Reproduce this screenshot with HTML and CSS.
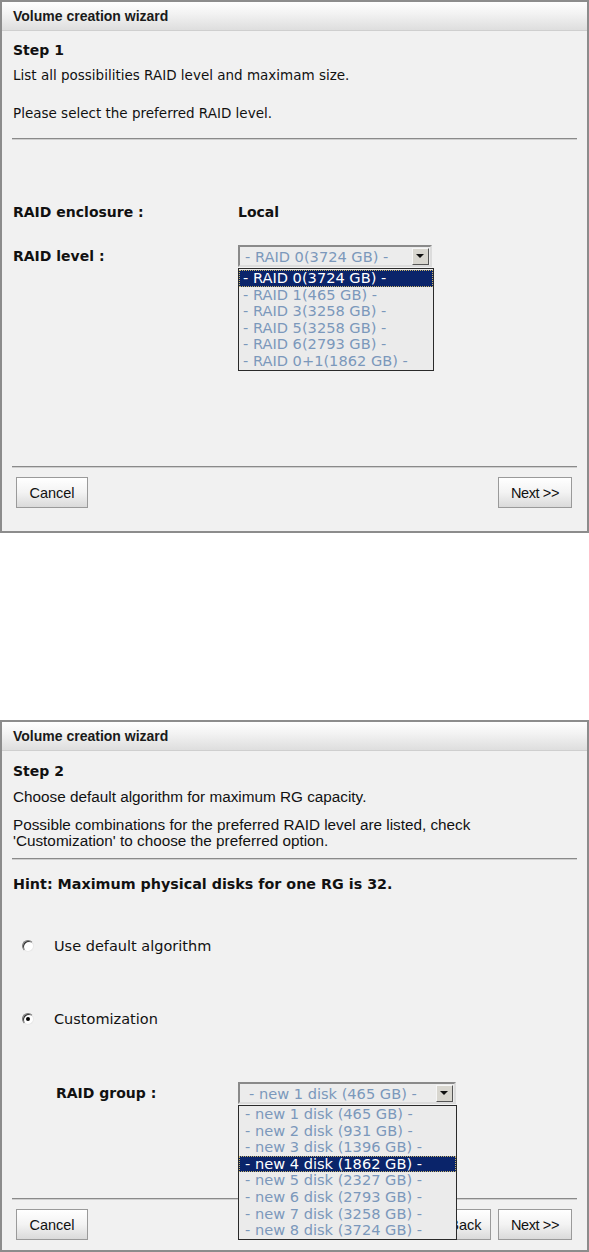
FILE: index.html
```html
<!DOCTYPE html>
<html>
<head>
<meta charset="utf-8">
<title>Volume creation wizard</title>
<link rel="stylesheet" href="styles.css">
</head>
<body>
<div class="panel panel-one">
  <div class="titlebar">Volume creation wizard</div>
  <div class="content">
    <div class="step">Step 1</div>
    <div class="desc desc-first">List all possibilities RAID level and maximam size.</div>
    <div class="desc desc-second">Please select the preferred RAID level.</div>
    <div class="rule rule-top"></div>
    <div class="row row-enclosure">
      <span class="label">RAID enclosure :</span>
      <span class="value">Local</span>
    </div>
    <div class="row row-level">
      <span class="label">RAID level :</span>
      <div class="select-wrap">
        <div class="select select-level"><span class="select-text">- RAID 0(3724 GB) -</span><span class="arrow"></span></div>
        <ul class="listbox listbox-level">
          <li class="sel">- RAID 0(3724 GB) -</li>
          <li>- RAID 1(465 GB) -</li>
          <li>- RAID 3(3258 GB) -</li>
          <li>- RAID 5(3258 GB) -</li>
          <li>- RAID 6(2793 GB) -</li>
          <li>- RAID 0+1(1862 GB) -</li>
        </ul>
      </div>
    </div>
    <div class="rule rule-foot rule-foot-one"></div>
    <div class="buttons">
      <button class="btn btn-cancel">Cancel</button>
      <button class="btn btn-next">Next &gt;&gt;</button>
    </div>
  </div>
</div>

<div class="panel panel-two">
  <div class="titlebar">Volume creation wizard</div>
  <div class="content">
    <div class="step step-two">Step 2</div>
    <div class="desc2 desc2-first">Choose default algorithm for maximum RG capacity.</div>
    <div class="desc2 desc2-second">Possible combinations for the preferred RAID level are listed, check<br>'Customization' to choose the preferred option.</div>
    <div class="rule rule-top2"></div>
    <div class="hint">Hint: Maximum physical disks for one RG is 32.</div>
    <div class="radio-row radio-first"><span class="radio"></span><span class="radio-label">Use default algorithm</span></div>
    <div class="radio-row radio-second"><span class="radio checked"></span><span class="radio-label">Customization</span></div>
    <div class="row row-group">
      <span class="label label-group">RAID group :</span>
      <div class="select-wrap">
        <div class="select select-group"><span class="select-text">- new 1 disk (465 GB) -</span><span class="arrow"></span></div>
        <ul class="listbox listbox-group">
          <li>- new 1 disk (465 GB) -</li>
          <li>- new 2 disk (931 GB) -</li>
          <li>- new 3 disk (1396 GB) -</li>
          <li class="sel">- new 4 disk (1862 GB) -</li>
          <li>- new 5 disk (2327 GB) -</li>
          <li>- new 6 disk (2793 GB) -</li>
          <li>- new 7 disk (3258 GB) -</li>
          <li>- new 8 disk (3724 GB) -</li>
        </ul>
      </div>
    </div>
    <div class="rule rule-foot rule-foot-two"></div>
    <div class="buttons">
      <button class="btn btn-cancel">Cancel</button>
      <div class="btn-right">
        <button class="btn btn-back">&lt;&lt; Back</button>
        <button class="btn btn-next">Next &gt;&gt;</button>
      </div>
    </div>
  </div>
</div>
</body>
</html>
```
FILE: styles.css
```css
* { box-sizing: border-box; }
html, body { margin: 0; padding: 0; background: #ffffff; }
body {
  width: 589px;
  font-family: "DejaVu Sans", Verdana, sans-serif;
  color: #111;
}
.panel {
  width: 589px;
  border: 2px solid #8c8c8c;
  background: #f1f1f1;
}
.panel-one { height: 533px; }
.panel-two { height: 532px; margin-top: 187px; }
.titlebar {
  height: 29px;
  border-bottom: 1px solid #cfcfcf;
  background: linear-gradient(#fefefe, #f3f3f3 40%, #dedede);
  font-family: "Liberation Sans", Arial, sans-serif;
  font-size: 14px;
  font-weight: bold;
  color: #1a1a1a;
  padding: 0 11px;
  line-height: 28px;
}
.content { padding: 0 10px; position: relative; }
.step {
  margin-top: 9px;
  height: 20px;
  line-height: 20px;
  font-size: 14px;
  font-weight: bold;
  padding-left: 1px;
}
.desc { font-size: 13.5px; line-height: 20px; height: 20px; padding-left: 1px; }
.desc-first { margin-top: 5px; }
.desc-second { margin-top: 18px; }
.rule {
  height: 2px;
  border-top: 1px solid #8a8a8a;
  border-bottom: 1px solid #cfcfcf;
}
.rule-top { margin-top: 15px; }
.row {
  display: flex;
  align-items: center;
  height: 22px;
  font-size: 14px;
  font-weight: bold;
}
.label { width: 226px; padding-left: 1px; }
.row-enclosure { margin-top: 61px; }
.row-level { margin-top: 22px; }
.select-wrap { position: relative; font-weight: normal; }
.select {
  height: 22px;
  border: 2px solid #8a8a8a;
  border-right-color: #dcdcdc;
  border-bottom-color: #dcdcdc;
  background: #ececec;
  display: flex;
  align-items: center;
  justify-content: space-between;
  padding-left: 5px;
  padding-right: 1px;
  font-size: 14.6px;
  color: #7b98bb;
  white-space: nowrap;
}
.select-level { width: 194px; }
.select-group { width: 218px; }
.select-group .select-text { padding-left: 4px; }
.arrow {
  width: 17px;
  height: 17px;
  flex: none;
  background: #d8d6cf;
  border: 1px solid;
  border-color: #f6f6f6 #555 #555 #f6f6f6;
  position: relative;
}
.arrow::after {
  content: "";
  position: absolute;
  left: 3px;
  top: 5px;
  border-left: 4px solid transparent;
  border-right: 4px solid transparent;
  border-top: 4px solid #111;
}
.listbox {
  position: absolute;
  left: 0;
  top: 23px;
  margin: 0;
  padding: 0;
  list-style: none;
  border: 1px solid #2a2a2a;
  background: #ebebeb;
  z-index: 5;
  font-size: 14.6px;
  color: #7b98bb;
}
.listbox-level { width: 196px; padding-top: 1px; }
.listbox-group { width: 219px; }
.listbox li {
  height: 16.6px;
  line-height: 16.6px;
  padding-left: 4px;
  white-space: nowrap;
}
.listbox-group li { padding-left: 6px; }
.listbox li.sel {
  background: #0a246a;
  color: #ffffff;
  outline: 1px dotted #c8b46a;
  outline-offset: -1px;
}
.rule-foot-one { margin-top: 199px; }
.buttons {
  display: flex;
  justify-content: space-between;
  margin-top: 9px;
  padding-left: 4px;
  padding-right: 5px;
}
.btn {
  height: 31px;
  border: 1px solid #9a9a9a;
  background: linear-gradient(#ffffff, #f3f3f3 50%, #dadada);
  font-family: "Liberation Sans", Arial, sans-serif;
  font-size: 14.5px;
  color: #111;
  padding: 0;
  margin: 0;
}
.btn-cancel { width: 72px; }
.btn-next { width: 74px; letter-spacing: -0.4px; }
.btn-right { display: flex; gap: 7px; }
.btn-back { width: 72px; }
.step-two { margin-top: 10px; }
.desc2 {
  font-family: "Liberation Sans", Arial, sans-serif;
  font-size: 15.3px;
  padding-left: 1px;
}
.desc2-first { margin-top: 6px; height: 20px; line-height: 20px; }
.desc2-second { margin-top: 10px; line-height: 16px; }
.rule-top2 { margin-top: 9px; }
.hint {
  margin-top: 14px;
  height: 20px;
  line-height: 20px;
  font-size: 14.3px;
  font-weight: bold;
  padding-left: 1px;
}
.radio-row {
  display: flex;
  align-items: center;
  height: 20px;
  font-size: 14.5px;
}
.radio-first { margin-top: 42px; }
.radio-second { margin-top: 53px; }
.radio {
  width: 12px;
  height: 12px;
  flex: none;
  border-radius: 50%;
  margin-left: 10px;
  margin-right: 20px;
  background: #fff;
  border: 1px solid;
  border-color: #777 #e8e8e8 #e8e8e8 #777;
  box-shadow: inset 1px 1px 0 #333;
  position: relative;
}
.radio.checked::after {
  content: "";
  position: absolute;
  left: 3px;
  top: 3px;
  width: 4px;
  height: 4px;
  border-radius: 50%;
  background: #000;
}
.row-group { margin-top: 53px; }
.label-group { padding-left: 44px; }
.rule-foot-two { margin-top: 94px; }
```
